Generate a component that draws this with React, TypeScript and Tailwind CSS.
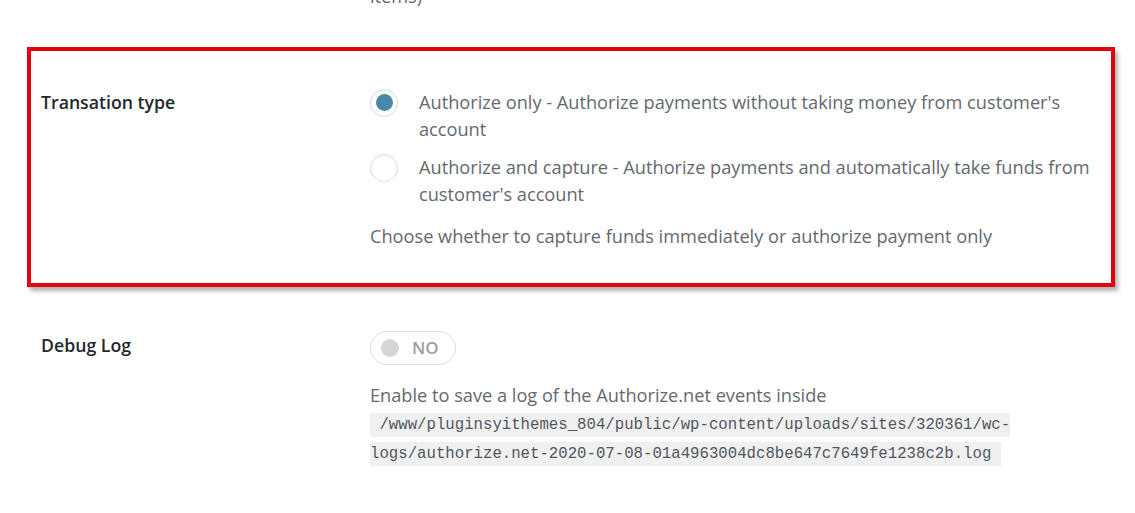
import * as React from "react";

const sans = "font-['Open_Sans','Noto_Sans',sans-serif]";

function Radio(props: { checked?: boolean }) {
  return (
    <span className="mt-[-0.5px] flex h-[28px] w-[28px] shrink-0 items-center justify-center rounded-full border border-[#dcdcde] bg-white shadow-[inset_0_1px_2px_rgba(0,0,0,0.05)]">
      {props.checked && <span className="h-[17px] w-[17px] rounded-full bg-[#4a87a9]" />}
    </span>
  );
}

function Option(props: { checked?: boolean; children: React.ReactNode }) {
  return (
    <label className="flex items-start gap-[21px]">
      <Radio checked={props.checked} />
      <span className="w-[690px] text-[18.2px] leading-[27px] text-[#646970]">{props.children}</span>
    </label>
  );
}

export default function App() {
  return (
    <div className={`relative h-[513px] w-[1135px] overflow-hidden bg-white ${sans}`}>
      <div className="mt-[-17px] pl-[370px] text-[18.2px] leading-[27px] text-[#646970]">items)</div>

      <div className="ml-[27px] mt-[37px] h-[240px] w-[1088px] border-4 border-[#e4000d] shadow-[3px_4px_4px_rgba(0,0,0,0.3)]">
        <div className="flex pt-[38px]">
          <div className="w-[339px] pl-[10px] text-[17.7px] font-semibold leading-[27px] text-[#23282d]">Transation type</div>
          <div className="flex flex-col">
            <Option checked>
              Authorize only - Authorize payments without taking money from customer's account
            </Option>
            <div className="h-[11px]" />
            <Option>
              Authorize and capture - Authorize payments and automatically take funds from customer's account
            </Option>
            <p className="mt-[15px] text-[18.2px] leading-[27px] text-[#646970]">
              Choose whether to capture funds immediately or authorize payment only
            </p>
          </div>
        </div>
      </div>

      <div className="mt-[45px] flex">
        <div className="w-[370px] pl-[41px] text-[17.7px] font-semibold leading-[27px] text-[#23282d]">Debug Log</div>
        <div className="flex flex-col">
          <div className="mt-[-1px] flex h-[34px] w-[86px] items-center gap-[13px] rounded-full border border-[#dcdcde] bg-white pl-[10px]">
            <span className="h-[18px] w-[18px] rounded-full bg-[#d6d6d6]" />
            <span className="text-[17px] font-semibold text-[#a0a0a0]">NO</span>
          </div>
          <p className="mt-[17px] text-[18.2px] leading-[27px] text-[#646970]">
            Enable to save a log of the Authorize.net events inside
          </p>
          <div className="mt-[2px] w-[670px] font-['Liberation_Mono',monospace] text-[15.7px] leading-[29px] text-[#50575e]">
            <code className="bg-[#f0f0f1] py-[3px] [box-decoration-break:clone]">
              {"\u00a0/www/pluginsyithemes_804/public/wp-content/uploads/sites/320361/wc-logs/authorize.net-2020-07-08-01a4963004dc8be647c7649fe1238c2b.log\u00a0"}
            </code>
          </div>
        </div>
      </div>
    </div>
  );
}
